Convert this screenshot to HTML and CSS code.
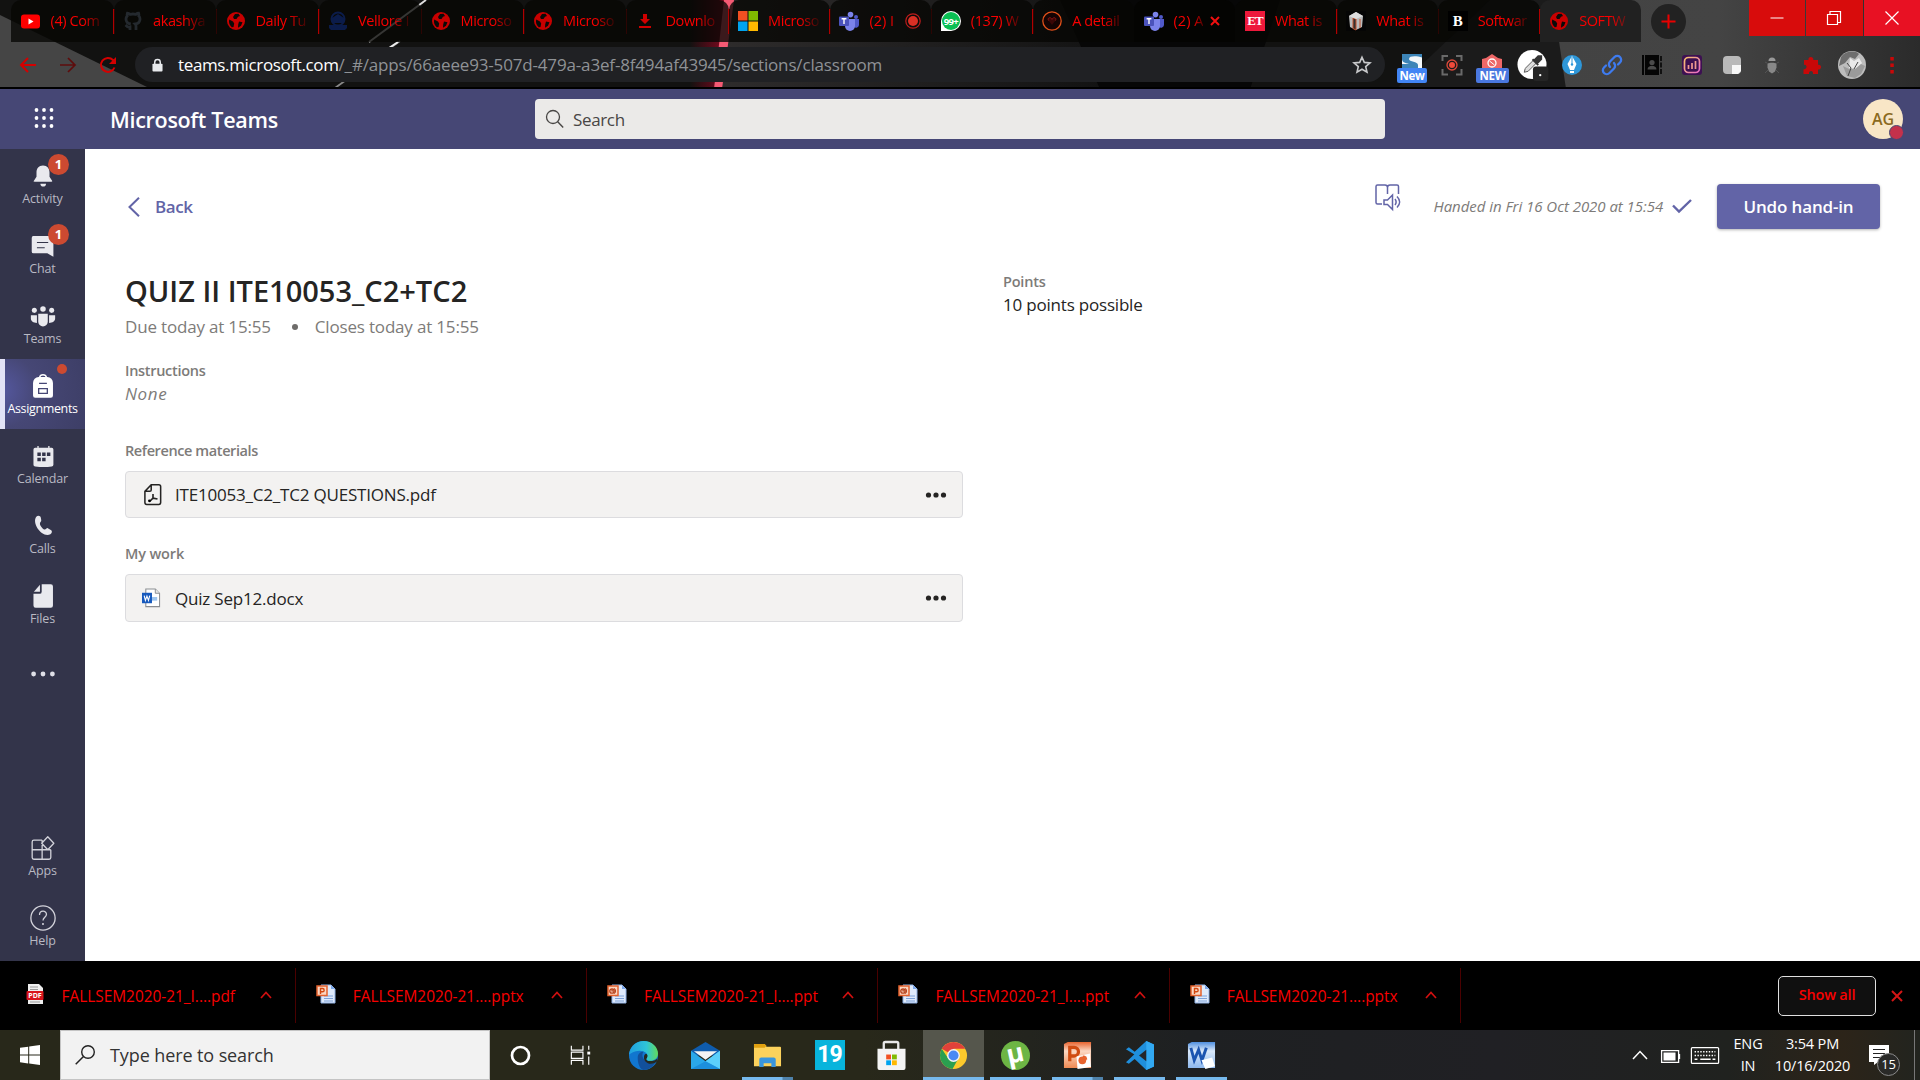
FILE: index.html
```html
<!DOCTYPE html>
<html lang="en">
<head>
<meta charset="utf-8">
<title>Microsoft Teams</title>
<link rel="stylesheet" href="styles.css">
</head>
<body>
<svg class="defs" aria-hidden="true">
  <defs>
    <linearGradient id="gEdge" x1="0" y1="0" x2="1" y2="0"><stop offset="0" stop-color="#1f9fe0"/><stop offset=".6" stop-color="#2fc4d8"/><stop offset="1" stop-color="#62dc5a"/></linearGradient>
    <linearGradient id="gOrange" x1="0" y1="0" x2="0" y2="1"><stop offset="0" stop-color="#e8642f"/><stop offset=".35" stop-color="#fbd9c4"/><stop offset="1" stop-color="#f08a52"/></linearGradient>
    <linearGradient id="gBlue" x1="0" y1="0" x2="0" y2="1"><stop offset="0" stop-color="#4f8fe0"/><stop offset=".35" stop-color="#dbe9fa"/><stop offset="1" stop-color="#8db8ee"/></linearGradient>
    <linearGradient id="gInsta" x1="0" y1="0" x2="1" y2="1"><stop offset="0" stop-color="#f7c46a"/><stop offset="1" stop-color="#e768c8"/></linearGradient>
  </defs>
  <symbol id="globe" viewBox="0 0 20 20"><circle cx="10" cy="10" r="9" fill="#c80000"/><path d="M3.200 8.500 7 10.500l1.200 2L7.500 16l-1.700.2A8 8 0 0 1 3.200 8.500zM9 3l3.500-.3 1.500 2.300-2 .8-1.500 2.200L8 8 7 6zM13 10.500l3.500.8-1.500 3.500-3 2 .2-3.300z" fill="#0a0a08"/></symbol>
  <symbol id="teams" viewBox="0 0 20 20"><circle cx="17" cy="6" r="2" fill="#5059c9"/><circle cx="11.500" cy="3.600" r="2.800" fill="#7b83eb"/><path d="M14 8h6v6a3 3 0 0 1-5 2z" fill="#5059c9"/><path d="M6 8h10v7a5 5 0 0 1-10 0z" fill="#7b83eb"/><rect y="5.500" width="10" height="9.500" rx="1" fill="#4b53bc"/><path d="M2.600 7.700h4.800M5 7.700V13" stroke="#fff" stroke-width="1.400"/></symbol>
  <symbol id="ppt" viewBox="0 0 20 20"><path d="M5 1h10l4 4v14H5z" fill="#dfeafb" stroke="#8fb1e4"/><path d="M15 1v4h4" fill="#7ea8e8"/><path d="M8 12h9M8 14.500h9M8 17h9" stroke="#7da2da"/><rect x="1" y="2" width="10" height="9.500" fill="#fbd6c2" stroke="#e4622d" stroke-width="1.500"/><path d="M4.500 10V4.500h2a1.500 1.500 0 0 1 0 3.300h-2" fill="none" stroke="#d2470f" stroke-width="1.400"/></symbol>
  <symbol id="pptold" viewBox="0 0 20 20"><path d="M5 1h10l4 4v14H5z" fill="#dfeafb" stroke="#8fb1e4"/><path d="M15 1v4h4" fill="#7ea8e8"/><path d="M8 12h9M8 14.500h9M8 17h9" stroke="#7da2da"/><rect x="1" y="2" width="10" height="9.500" fill="#fbd6c2" stroke="#e4622d" stroke-width="1.500"/><circle cx="5" cy="7" r="2.200" fill="none" stroke="#b5401a" stroke-width="1.300"/><path d="M7 4.500c2 1 2 4 0 5M5 5v2h2" fill="none" stroke="#b5401a" stroke-width="1.200"/></symbol>
  <symbol id="chev" viewBox="0 0 12 8"><path d="M1 7l5-5.500L11 7" fill="none" stroke="#d01010" stroke-width="1.700"/></symbol>
  <symbol id="dots" viewBox="0 0 22 6"><circle cx="3.500" cy="3" r="2.600"/><circle cx="11" cy="3" r="2.600"/><circle cx="18.500" cy="3" r="2.600"/></symbol>
</svg>

<div class="screen">
  <div class="chrome">
    <svg class="theme" viewBox="0 0 1920 89" preserveAspectRatio="none">
      <defs>
        <linearGradient id="tGrey" x1="0" x2="1"><stop offset="0" stop-color="#434343"/><stop offset=".45" stop-color="#444"/><stop offset="1" stop-color="#2b2b2b"/></linearGradient>
        <linearGradient id="tMid" x1="0" x2="1"><stop offset="0" stop-color="#2e2c2c"/><stop offset="1" stop-color="#131313"/></linearGradient>
        <linearGradient id="tGlow" x1="0" x2="1"><stop offset="0" stop-color="#90001c" stop-opacity="0"/><stop offset="1" stop-color="#900a24"/></linearGradient>
      </defs>
      <rect width="1920" height="89" fill="#121211"/>
      <path d="M0 15 147 87H0z" fill="#454545"/>
      <path d="M426 0 369 42" stroke="#ddd" stroke-width="2"/>
      <path d="M400 41 335 88" stroke="#888" stroke-width="1.800"/>
      <path d="M398 42 389 48" stroke="#eee" stroke-width="2"/>
      <path d="M690 0h40l-11 89h-29z" fill="url(#tGlow)"/>
      <path d="M730 0h330l40 89H720z" fill="url(#tMid)"/>
      <path d="M1060 0h220l-30 89h-150z" fill="#070707"/>
      <path d="M1490 0h66l10 89h-170z" fill="#1b1b1b"/>
      <path d="M1553 0h367v89h-354z" fill="url(#tGrey)"/>
      <path d="M724 0h10l-12 89h-8z" fill="#f55a74"/>
      <rect y="87" width="1920" height="2" fill="#000"/>
    </svg>
    <div class="tabstrip">
      <div class="tabs">
        <div class="tab"><svg class="fav" viewBox="0 0 20 20"><rect y="3.500" width="19" height="14" rx="3" fill="#f00"/><path d="M7.500 7.500v6l5-3z" fill="#fff"/></svg><span class="tt">(4) Com</span></div>
        <div class="tab"><svg class="fav" viewBox="0 0 20 20"><path d="M7 19v-3c-3 .7-3.500-1.200-4.500-2M13 19v-4c0-1-.3-1.500-.8-2 3-.4 4.800-1.700 4.800-5 0-1.200-.4-2.300-1.200-3 .2-1 .1-2-.2-2.800-1 0-2 .6-2.800 1.200a10 10 0 0 0-5.600 0C6.400 2.700 5.400 2.200 4.400 2.200c-.3.800-.4 1.800-.2 2.800C3.400 5.800 3 6.900 3 8c0 3.300 1.800 4.600 4.800 5" fill="none" stroke="#24292e" stroke-width="2.800"/></svg><span class="tt">akashya</span></div>
        <div class="tab"><svg class="fav"><use href="#globe"/></svg><span class="tt">Daily Tu</span></div>
        <div class="tab"><svg class="fav" viewBox="0 0 20 20"><circle cx="10" cy="8" r="6.500" fill="none" stroke="#0b1c4a" stroke-width="2"/><path d="M4 7l6-4 6 4v5H4zM1 14h18v3l-2 2H3l-2-2z" fill="#0b1c4a"/></svg><span class="tt">Vellore I</span></div>
        <div class="tab"><svg class="fav"><use href="#globe"/></svg><span class="tt">Microso</span></div>
        <div class="tab"><svg class="fav"><use href="#globe"/></svg><span class="tt">Microso</span></div>
        <div class="tab"><svg class="fav dlfav" viewBox="0 0 20 20"><path d="M8 3h4v5h3l-5 5-5-5h3zM4 15h12v2H4z" fill="#d00000"/></svg><span class="tt">Downlo</span></div>
        <div class="tab"><svg class="fav" viewBox="0 0 20 20"><path d="M0 0h9.500v9.500H0z" fill="#f25022"/><path d="M10.500 0H20v9.500h-9.500z" fill="#7fba00"/><path d="M0 10.500h9.500V20H0z" fill="#00a4ef"/><path d="M10.500 10.500H20V20h-9.500z" fill="#ffb900"/></svg><span class="tt">Microso</span></div>
        <div class="tab"><svg class="fav"><use href="#teams"/></svg><span class="tt narrow">(2) I</span><svg class="rec" viewBox="0 0 16 16"><circle cx="8" cy="8" r="7.200" fill="none" stroke="#c01c1c" stroke-width="1.200"/><circle cx="8" cy="8" r="5" fill="#d93025"/></svg></div>
        <div class="tab"><svg class="fav" viewBox="0 0 20 20"><path d="M0 20V10A10 10 0 1 1 10 20z" fill="#fff"/><circle cx="10" cy="10" r="9" fill="#0abf53"/><text x="9.800" y="13.800" class="badge99">99+</text></svg><span class="tt">(137) W</span></div>
        <div class="tab"><svg class="fav" viewBox="0 0 20 20"><circle cx="10" cy="10" r="9.200" fill="#150303" stroke="#e0501a" stroke-width="1.300"/><path d="M10 14 6.500 9.500C5 6.500 9 5.500 10 8.500c1-3 5-2 3.500 1z" fill="#3a0606"/><path d="M10 8.500c1-3 5-2 3.500 1M6.500 9.500C5 6.500 9 5.500 10 8.500" fill="none" stroke="#8a1414"/></svg><span class="tt">A detail</span></div>
        <div class="tab active"><svg class="fav"><use href="#teams"/></svg><span class="tt narrow">(2) A</span><svg class="tx" viewBox="0 0 10 10"><path d="M1 1l8 8M9 1 1 9" stroke="#f01010" stroke-width="2"/></svg></div>
        <div class="tab"><span class="fav et">ET</span><span class="tt">What is</span></div>
        <div class="tab"><svg class="fav" viewBox="0 0 20 20"><rect width="20" height="20" fill="#050505"/><path d="M10 1l7 4-1 11-6 3-6-3L3 5z" fill="#bbb"/><path d="M10 8v11l-3-1.500V7zM14 8v9" stroke="#c4512c" fill="#333"/><path d="M10 1l7 4-7 3-7-3z" fill="#ddd"/></svg><span class="tt">What is</span></div>
        <div class="tab"><span class="fav bb">B</span><span class="tt">Softwar</span></div>
        <div class="tab last"><svg class="fav"><use href="#globe"/></svg><span class="tt">SOFTW</span></div>
      </div>
      <div class="newtab"><svg viewBox="0 0 16 16"><path d="M8 .5v15M.5 8h15" stroke="#e80000" stroke-width="2.200"/></svg></div>
      <div class="winbtns">
        <div class="wb"><svg viewBox="0 0 14 14"><path d="M.5 7h13" stroke="#fff"/></svg></div>
        <div class="wb"><svg viewBox="0 0 14 14"><path d="M.5 3.500h10v10H.5zM3 3.500V.5h10.500v11H11" fill="none" stroke="#fff" stroke-width="1.200"/></svg></div>
        <div class="wb close"><svg viewBox="0 0 14 14"><path d="M.5.5l13 13M13.500.5l-13 13" stroke="#fff" stroke-width="1.200"/></svg></div>
      </div>
    </div>
    <div class="toolbar">
      <div class="nav">
        <svg viewBox="0 0 18 18"><path d="M17 9H2M9 2 2 9l7 7" fill="none" stroke="#d40000" stroke-width="2"/></svg>
        <svg viewBox="0 0 18 18"><path d="M1 9h15M9 2l7 7-7 7" fill="none" stroke="#5e0c0c" stroke-width="1.700"/></svg>
        <svg viewBox="0 0 18 18"><path d="M15.500 11.500A7 7 0 1 1 14 4l2 2" fill="none" stroke="#d40000" stroke-width="2"/><path d="M17 1v7h-7z" fill="#d40000"/></svg>
      </div>
      <div class="omnibox">
        <svg class="lock" viewBox="0 0 12 14"><path d="M3 6V4a3 3 0 0 1 6 0v2" fill="none" stroke="#e8eaed" stroke-width="1.600"/><rect x=".5" y="5.500" width="11" height="8.500" rx="1" fill="#e8eaed"/></svg>
        <span class="url"><b>teams.microsoft.com</b>/_#/apps/66aeee93-507d-479a-a3ef-8f494af43945/sections/classroom</span>
        <svg class="star" viewBox="0 0 20 20"><path d="M10 2.200l2.300 5.200 5.700.5-4.300 3.700 1.300 5.600-5-3-5 3 1.300-5.600L2 7.900l5.700-.5z" fill="none" stroke="#c8c9cb" stroke-width="1.600"/></svg>
      </div>
      <div class="exts">
        <div class="ext"><svg viewBox="0 0 30 30"><rect x="5" y="4" width="20" height="16" fill="#f4f8fb"/><path d="M5 4h20v3.500c-5-1.500-13-2-13 1.500 0 3 9 2.500 9 6v3H5v-4h7c-4-1-7-2-7-5z" fill="#3d85b8"/></svg><span class="pill">New</span></div>
        <div class="ext"><svg viewBox="0 0 30 30"><path d="M5.500 11V6H11M19 6h5.500v5M24.500 19v5.500H19M11 24.500H5.500V19" fill="none" stroke="#6a6a6a" stroke-width="2"/><circle cx="15" cy="15" r="5" fill="none" stroke="#e04a3a" stroke-width="1.300"/><circle cx="15" cy="15" r="3" fill="#f04a3a"/></svg></div>
        <div class="ext"><svg viewBox="0 0 30 30"><path d="M5 9l4-1 6-4 6 4 4 1v9H5z" fill="#ef6868"/><circle cx="15" cy="13" r="4" fill="none" stroke="#fff" stroke-width="1.300"/><path d="M12.500 11l5 4" stroke="#fff"/></svg><span class="pill wide">NEW</span></div>
        <div class="ext"><svg viewBox="0 0 30 31"><circle cx="15" cy="15" r="15" fill="#fff"/><path d="M7 23l1-4 9-9 3 3-9 9z" fill="#ddd" stroke="#555"/><path d="M15.500 9.500l6 6M17.500 10.500l4-4 3 0 0 3-4 4z" fill="#333" stroke="#333" stroke-width="2"/><rect x="16" y="17" width="16" height="15" rx="3" fill="#252525"/><circle cx="23.500" cy="26" r="1.200" fill="#fff"/></svg></div>
        <div class="ext"><svg viewBox="0 0 30 30"><circle cx="15" cy="15" r="10" fill="#2e97d9"/><path d="M15 6l4.500 8-2.500 6h-4l-2.500-6zM13 21h4v2h-4z" fill="#fff"/><path d="M15 7v7" stroke="#2e97d9"/><circle cx="15" cy="14.500" r="1.200" fill="#2e97d9"/></svg></div>
        <div class="ext"><svg viewBox="0 0 30 30"><g fill="none" stroke="#3e7bef" stroke-width="2.300" stroke-linecap="round"><path d="M13 17a4 4 0 0 1 0-5.500l4.500-4.500a3.800 3.800 0 0 1 5.500 5.500l-2 2"/><path d="M17 13a4 4 0 0 1 0 5.500L12.500 23A3.800 3.800 0 0 1 7 17.500l2-2"/></g></svg></div>
        <div class="ext"><svg viewBox="0 0 30 30"><path d="M5 5h2v20H5zM8 5h14v20H8z" fill="#050505"/><path d="M23 6h2v5h-2zM23 12.500h2v5h-2zM23 19h2v5h-2z" fill="#111"/><circle cx="15" cy="12.500" r="2.600" fill="#4a4a4a"/><path d="M10.500 19.500c0-5 9-5 9 0z" fill="#4a4a4a"/></svg></div>
        <div class="ext"><svg viewBox="0 0 30 30"><rect x="5" y="5" width="20" height="20" rx="3" fill="#3d1052"/><rect x="7.500" y="7.500" width="15" height="15" rx="4" fill="none" stroke="url(#gInsta)" stroke-width="1.700"/><path d="M11.500 15v4M15 13v6M18.500 11v8" stroke="#f09a90" stroke-width="1.700"/></svg></div>
        <div class="ext"><svg viewBox="0 0 30 30"><rect x="6" y="6" width="18" height="18" rx="4" fill="#b9b9b9"/><path d="M15 15h9v6l-3 3h-6z" fill="#f7f7f7"/></svg></div>
        <div class="ext"><svg viewBox="0 0 30 30"><path d="M11.500 11a3.500 3.500 0 0 1 7 0z" fill="#999"/><path d="M10.500 13.500c2-1 7-1 9 0v4l-1.500 4-3 2-3-2-1.500-4z" fill="#888"/><path d="M8 23l3-3M22 23l-3-3M8 12l2 1M22 12l-2 1" stroke="#555"/></svg></div>
        <div class="ext"><svg viewBox="0 0 30 30"><path d="M7 10h4.500c-1-4 5.500-4 4.800 0H21v4.800c4-1 4 5.400 0 4.700V24h-5c.6-4-4.500-4-4 0H6.500v-4.800c4 .5 4-4.900.5-4.400z" fill="#c90808"/></svg></div>
        <div class="ext"><svg viewBox="0 0 30 30"><circle cx="15" cy="15" r="14" fill="#bdbdbd"/><path d="M4 7c4-6 14-7 18-3l-4 5-5-2-5 6-6 3z" fill="#6e6e6e"/><path d="M13 8l4 3 5-3 3 5-5 6-8-1z" fill="#e9e9e9"/><path d="M6 16l6 3 6 0 6-5 4 2-4 8-6 4-8-2z" fill="#9b9b9b"/><path d="M10 13l4 5-3 8M21 12l-4 7" stroke="#444" fill="none"/></svg></div>
        <div class="ext"><svg viewBox="0 0 30 30"><path d="M13.300 7h3.500v3.500h-3.500zM13.300 13.500h3.500V17h-3.500zM13.300 20h3.500v3.500h-3.500z" fill="#c90808"/></svg></div>
      </div>
    </div>
  </div>

  <header class="tbar">
    <svg class="waffle" viewBox="0 0 20 20" fill="#fff"><circle cx="2.500" cy="2" r="1.900"/><circle cx="10" cy="2" r="1.900"/><circle cx="17.500" cy="2" r="1.900"/><circle cx="2.500" cy="10" r="1.900"/><circle cx="10" cy="10" r="1.900"/><circle cx="17.500" cy="10" r="1.900"/><circle cx="2.500" cy="18" r="1.900"/><circle cx="10" cy="18" r="1.900"/><circle cx="17.500" cy="18" r="1.900"/></svg>
    <span class="brand">Microsoft Teams</span>
    <div class="search"><svg viewBox="0 0 20 20"><circle cx="8" cy="8" r="6.500" fill="none" stroke="#484644" stroke-width="1.300"/><path d="M12.700 12.700l5.500 5.800" stroke="#484644" stroke-width="1.400"/></svg><span>Search</span></div>
    <div class="avatar"><span>AG</span><i class="presence"></i></div>
  </header>

  <div class="work">
    <nav class="rail">
      <div class="ri"><svg viewBox="0 0 30 30"><path d="M15 3c5 0 7.500 3.500 7.500 8v5l3 4.500c.4.600 0 1-.6 1H5.100c-.6 0-1-.4-.6-1l3-4.500v-5C7.500 6.500 10 3 15 3z" fill="#e9e9ee"/><path d="M12 24h6.500a3.200 3.200 0 0 1-6.500 0z" fill="#e9e9ee"/></svg><span>Activity</span><i class="bdg">1</i></div>
      <div class="ri"><svg viewBox="0 0 30 30"><path d="M3 3.500h22a2 2 0 0 1 2 2v22l-7-4H4a2 2 0 0 1-2-2v-16z" fill="#e9e9ee"/><path d="M8 11h13M8 17h9" stroke="#33344a" stroke-width="1.300"/></svg><span>Chat</span><i class="bdg">1</i></div>
      <div class="ri"><svg viewBox="0 0 30 30" fill="#e9e9ee"><circle cx="5" cy="8.500" r="2.900"/><circle cx="15" cy="7" r="3.200"/><circle cx="25" cy="8.500" r="2.900"/><path d="M9.500 12.500h11v9a5.500 5.500 0 0 1-11 0zM1 14h7v9C4 23 1 21 1 18zM29 14h-7v9c4 0 7-2 7-5z"/></svg><span>Teams</span></div>
      <div class="ri on"><svg viewBox="0 0 30 30"><path d="M11 5c1-4 7-4 8 0" fill="none" stroke="#fff" stroke-width="1.600"/><path d="M10 4.500h10a7 7 0 0 1 6.500 7V26a2.500 2.500 0 0 1-2.500 2.500H6A2.500 2.500 0 0 1 3.500 26V11.500a7 7 0 0 1 6.500-7z" fill="#fff"/><path d="M10.500 12h9M10 18h10v5.500H10z" fill="none" stroke="#464775" stroke-width="1.500"/></svg><span>Assignments</span><i class="dot"></i></div>
      <div class="ri"><svg viewBox="0 0 30 30"><path d="M6 5.500h2.500V3.500H10v2h11v-2h1.500v2H25a2 2 0 0 1 2 2V25a2 2 0 0 1-2 2c-6 1-12 1-19 0a2 2 0 0 1-2-2V7.500a2 2 0 0 1 2-2z" fill="#e9e9ee"/><path d="M8.500 11h4v4h-4zM14 11h4v4h-4zM19.500 11h4v4h-4zM8.500 17h4v4h-4zM14 17h4v4h-4z" fill="#33344a"/></svg><span>Calendar</span></div>
      <div class="ri"><svg viewBox="0 0 30 30"><path d="M7 4.500c2-2 5-1.500 5.500 1l.5 3c.2 1.500-2 2.500-1.500 4.500s3 5.500 5 6 2.500-2 4-1.500l3.500 2c2 1 1.500 3.500-.5 5C14 29 2 12 7 4.500z" fill="#e9e9ee"/></svg><span>Calls</span></div>
      <div class="ri"><svg viewBox="0 0 30 30"><path d="M13.500 1.500H24a2.500 2.500 0 0 1 2.500 2.500v22a2.500 2.500 0 0 1-2.500 2.500H6.500A2.500 2.500 0 0 1 4 26V12.500h7a2.500 2.500 0 0 0 2.500-2.500z" fill="#e9e9ee"/><path d="M11.500 2v8H4.500z" fill="#e9e9ee"/></svg><span>Files</span></div>
      <div class="ri more"><svg viewBox="0 0 24 6" fill="#e0e0e8"><circle cx="2.600" cy="3" r="2.400"/><circle cx="12" cy="3" r="2.400"/><circle cx="21.400" cy="3" r="2.400"/></svg></div>
      <div class="ri apps"><svg viewBox="0 0 30 30"><path d="M14 6H4.500a2 2 0 0 0-2 2v18a2 2 0 0 0 2 2H22a2 2 0 0 0 2-2V17M14 5.800V28M2.500 17H24M20.500 2l7 7.500-7 7.500-7-7.500z" fill="none" stroke="#d2d2da" stroke-width="1.500" stroke-linejoin="round"/></svg><span>Apps</span></div>
      <div class="ri"><svg viewBox="0 0 30 30"><circle cx="15" cy="15" r="14" fill="none" stroke="#d2d2da" stroke-width="1.500"/><path d="M11 11.500c0-6 8-5.500 8-.8 0 3.500-4 3.500-4 7.300" fill="none" stroke="#d2d2da" stroke-width="1.500"/><circle cx="15" cy="22" r="1.200" fill="#d2d2da"/></svg><span>Help</span></div>
    </nav>
    <main class="main">
      <div class="top">
        <svg class="bk" viewBox="0 0 12 20"><path d="M11 .8 1.500 10l9.500 9.200" fill="none" stroke="#6264a7" stroke-width="2"/></svg>
        <span class="back">Back</span>
        <svg class="reader" viewBox="0 0 26 27"><path d="M7 20H2.500A1.500 1.500 0 0 1 1 18.500v-16A1.500 1.500 0 0 1 2.500 1H10c1.500 0 2.500 1 2.500 2.500V10M12.500 3.500C12.500 2 13.500 1 15 1h7a1.500 1.500 0 0 1 1.500 1.500V10" fill="none" stroke="#6264a7" stroke-width="1.500"/><path d="M9 16h3.500l5-5v14.500l-5-5H9zM20 15c1.500 2 1.500 4 0 6M22 12.500c3.500 3.500 3.500 7.500 0 11" fill="none" stroke="#6264a7" stroke-width="1.500"/></svg>
        <span class="handed">Handed in Fri 16 Oct 2020 at 15:54</span>
        <svg class="check" viewBox="0 0 20 14"><path d="M1 6.500l6 6L19 1" fill="none" stroke="#6264a7" stroke-width="2.400"/></svg>
        <button class="undo"><span>Undo hand-in</span></button>
      </div>
      <div class="cols">
        <section>
          <h1>QUIZ II ITE10053_C2+TC2</h1>
          <p class="due"><span>Due today at 15:55</span><i></i><span>Closes today at 15:55</span></p>
          <h2 class="l1">Instructions</h2>
          <p class="none">None</p>
          <h2 class="l2">Reference materials</h2>
          <div class="file f1"><svg class="pdf" viewBox="0 0 20 24"><path d="M8 1.200h8.500a2 2 0 0 1 2 2V21a2 2 0 0 1-2 2H3a2 2 0 0 1-2-2V8.500zM8 1.200V7a1.500 1.500 0 0 1-1.500 1.500H1" fill="none" stroke="#252423" stroke-width="1.700"/><path d="M10 11.500v4.500l-4 4M10 16l5 1" fill="none" stroke="#252423" stroke-width="1.800"/><circle cx="6" cy="19" r="1.500"/></svg><span>ITE10053_C2_TC2 QUESTIONS.pdf</span><svg class="ell"><use href="#dots"/></svg></div>
          <h2 class="l3">My work</h2>
          <div class="file f2"><svg class="docx" viewBox="0 0 20 20"><path d="M4 .6h10l4.500 4.500v14H4z" fill="#fff" stroke="#8a8d91" stroke-width="1.100"/><path d="M14 .6V5h4.500" fill="#e8e8e8" stroke="#8a8d91"/><path d="M10 10h6M10 12h6" stroke="#7fb2ea" stroke-width="1.500"/><rect y="4.500" width="10.500" height="11" fill="#185abd"/><path d="M2.300 7.500l1.300 5 1.600-4.500L6.800 12.500l1.300-5" fill="none" stroke="#fff" stroke-width="1.200"/></svg><span>Quiz Sep12.docx</span><svg class="ell"><use href="#dots"/></svg></div>
        </section>
        <aside>
          <h2>Points</h2>
          <p>10 points possible</p>
        </aside>
      </div>
    </main>
  </div>

  <div class="shelf">
    <div class="dl"><svg class="di" viewBox="0 0 20 20"><path d="M3 0h11l4 4v16H3z" fill="#eee"/><path d="M5 3h8M5 5.500h8M5 18h10" stroke="#999"/><rect x="1.500" y="7" width="17" height="9" rx="1" fill="#d8141c"/><text x="10" y="14" class="pdft">PDF</text></svg><span>FALLSEM2020-21_I....pdf</span><svg class="dc"><use href="#chev"/></svg></div>
    <div class="dl"><svg class="di"><use href="#ppt"/></svg><span>FALLSEM2020-21....pptx</span><svg class="dc"><use href="#chev"/></svg></div>
    <div class="dl"><svg class="di"><use href="#pptold"/></svg><span>FALLSEM2020-21_I....ppt</span><svg class="dc"><use href="#chev"/></svg></div>
    <div class="dl"><svg class="di"><use href="#pptold"/></svg><span>FALLSEM2020-21_I....ppt</span><svg class="dc"><use href="#chev"/></svg></div>
    <div class="dl"><svg class="di"><use href="#ppt"/></svg><span>FALLSEM2020-21....pptx</span><svg class="dc"><use href="#chev"/></svg></div>
    <button class="showall">Show all</button>
    <svg class="sx" viewBox="0 0 12 12"><path d="M1 1l10 10M11 1 1 11" stroke="#d41515" stroke-width="2"/></svg>
  </div>

  <div class="taskbar">
    <div class="start"><svg viewBox="0 0 20 20" fill="#fff"><path d="M0 2.800 8.200 1.700v7.800H0zM9.200 1.500 20 0v9.500H9.200zM0 10.500h8.200v7.900L0 17.200zM9.200 10.500H20V20L9.200 18.500z"/></svg></div>
    <div class="tsearch"><svg viewBox="0 0 20 20"><circle cx="13" cy="7" r="6.300" fill="none" stroke="#222" stroke-width="1.400"/><path d="M8.500 11.500.7 19.300" stroke="#222" stroke-width="1.500"/></svg><span>Type here to search</span></div>
    <div class="ti c1"><svg viewBox="0 0 30 30"><circle cx="15" cy="15" r="8.800" fill="none" stroke="#fff" stroke-width="2.800"/></svg></div>
    <div class="ti c2"><svg viewBox="0 0 30 30"><path d="M4.500 5v4.500h12V5M4.500 24.500V20h12v4.500M4.500 11.500h12v6.500h-12zM22.500 5v4M22.500 16v8.500" fill="none" stroke="#fff" stroke-width="1.200"/><path d="M21 11h3v3h-3z" fill="#fff"/></svg></div>
    <div class="ti"><svg viewBox="0 0 30 30"><circle cx="15" cy="15" r="15" fill="#1176cf"/><path d="M0 14C1 5 8 0 15 0c9 0 15 6.500 15 13 0 5-4 7.500-8 7.500-3 0-5-1-4-2.500 3-5-2-8-7-8-6 0-9 3-11 4z" fill="url(#gEdge)"/><path d="M9 17c0-4 3-6 6-6-3 4 0 10 6 11 4 .5 6-1 7-1-3 6-8 9-13 9-4-1-6-7-6-13z" fill="#12509b"/><path d="M18.500 17.500C17 19 18.500 21 22.500 20.800c2.500 0 5-1 6.500-2.500v3c-7 5-14 1-13.500-5 0-2 1.500-3 2.500-3 1.500 1 1.500 3 .5 4.200z" fill="#26281f"/></svg></div>
    <div class="ti"><svg viewBox="0 0 30 30"><path d="M0 10 15 1l15 9v5H0z" fill="#0f5cad"/><path d="M0 10l15 11L30 10v19H0z" fill="#2aa8ea"/><path d="M30 10 15 21l15 8z" fill="#5cd0fa"/><path d="M0 29l15-8 15 8z" fill="#1c8fdc"/><path d="M3 10.500h24L15 19.500z" fill="#f3f3f3"/></svg></div>
    <div class="ti run stack"><svg viewBox="0 0 30 30"><path d="M1 4a1 1 0 0 1 1-1h10l2 3h14a1 1 0 0 1 1 1v19H1z" fill="#fcd25c"/><path d="M1 4a1 1 0 0 1 1-1h10l2 2-2 2H1z" fill="#e0a010"/><path d="M6.500 27v-8a2 2 0 0 1 2-2h13a2 2 0 0 1 2 2v8h-4.500v-4h-8v4z" fill="#3a96dd"/></svg></div>
    <div class="ti"><div class="n19">19</div></div>
    <div class="ti"><svg viewBox="0 0 30 30"><path d="M7 10V2.500A1.500 1.500 0 0 1 8.500 1h12A1.500 1.500 0 0 1 22 2.500V10" fill="none" stroke="#e8e8e8" stroke-width="2.400"/><path d="M.5 8h29v20a2 2 0 0 1-2 2h-25a2 2 0 0 1-2-2z" fill="#f4f4f4"/><path d="M9.500 14h5v5h-5z" fill="#f25022"/><path d="M15.500 14h5v5h-5z" fill="#7fba00"/><path d="M9.500 20h5v5h-5z" fill="#00a4ef"/><path d="M15.500 20h5v5h-5z" fill="#ffb900"/></svg></div>
    <div class="ti run cur"><svg viewBox="0 0 30 30"><circle cx="15" cy="15" r="14" fill="#fcc92c"/><path d="M15 15 2.900 8A14 14 0 0 1 27.100 8H15z" fill="#e0413a"/><path d="M2.900 8A14 14 0 0 0 14 29l6-11-5-3-5.500 3z" fill="#2b9f50"/><circle cx="15" cy="15" r="6.600" fill="#f4f4f4"/><circle cx="15" cy="15" r="5.200" fill="#4a8af4"/></svg></div>
    <div class="ti run"><svg viewBox="0 0 30 30"><circle cx="15" cy="15" r="15" fill="#6db544"/><text x="15" y="22" class="mu" transform="rotate(-12 15 15)">µ</text></svg></div>
    <div class="ti run stack"><svg viewBox="0 0 30 30"><path d="M1 3l4-2h24v27H1z" fill="url(#gOrange)"/><path d="M7 21V6.500h4.500a4.500 4.500 0 0 1 0 9H7" fill="none" stroke="#d04c12" stroke-width="3.400"/><path d="M14 16l14-3 1 14-14 2z" fill="#fff"/><circle cx="20" cy="20" r="4" fill="#e8642f"/><path d="M20.500 19.500V15a4 4 0 0 1 4.500 4.500z" fill="#e8642f"/></svg></div>
    <div class="ti run"><svg viewBox="0 0 30 30"><path d="M22 0l8 3.500v23L22 30 10 18.500l-6 5-3-1.500L18 6 22 8.500v13L1 8.500l3-2 6 4.500z" fill="#1f8fdc"/><path d="M22 0l8 3.500v23L22 30z" fill="#32a9f2"/><path d="M14.500 15 22 9v12z" fill="#24262a"/></svg></div>
    <div class="ti run"><svg viewBox="0 0 30 30"><path d="M1 3l4-2h24v27H1z" fill="url(#gBlue)"/><path d="M4 7l3.500 13L12 9l3.500 11L20 7" fill="none" stroke="#1b54b0" stroke-width="3"/><path d="M15 20l11-3 3 9-10 3z" fill="#fff"/></svg></div>
    <div class="tray">
      <svg class="t1" viewBox="0 0 16 10"><path d="M1 9l7-7.500L15 9" fill="none" stroke="#fff" stroke-width="1.500"/></svg>
      <svg class="t2" viewBox="0 0 20 13"><path d="M.6.6h17v11.800H.6zM18.500 4v5" fill="none" stroke="#fff" stroke-width="1.300"/><rect x="2.500" y="2.500" width="12" height="8" fill="#fff"/></svg>
      <svg class="t3" viewBox="0 0 30 18"><rect x=".6" y=".6" width="28.800" height="16.800" rx="1" fill="none" stroke="#fff" stroke-width="1.300"/><path d="M4 5h22M4 9h22" stroke="#fff" stroke-width="1.500" stroke-dasharray="1.500 1.500"/><path d="M4 13h3M10 13h11M23 13h3" stroke="#fff" stroke-width="1.500"/></svg>
      <div class="lang"><span>ENG</span><span>IN</span></div>
      <div class="clock"><span>3:54 PM</span><span>10/16/2020</span></div>
      <div class="notif"><svg viewBox="0 0 20 20"><path d="M0 0h20v17H9l-4 3v-3H0z" fill="#fff"/><path d="M4 4.500h12M4 8.500h12M4 12.500h8" stroke="#222" stroke-width="1.200"/></svg><span>15</span></div>
      <div class="peek"></div>
    </div>
  </div>
</div>
</body>
</html>
```
FILE: styles.css
```css
* { box-sizing: border-box; }
body { margin: 0; font-family: "Open Sans", "Noto Sans", sans-serif; background: #fff; }
h1, h2, p { margin: 0; font-weight: 400; }
svg { display: block; flex: none; overflow: visible; }
span { white-space: nowrap; }
i { font-style: normal; }
.defs { position: absolute; width: 0; height: 0; }
.screen { width: 1920px; height: 1080px; display: flex; flex-direction: column; overflow: hidden; }

/* browser frame */
.chrome { position: relative; height: 89px; flex: none; background: #111; }
.theme { position: absolute; inset: 0; width: 1920px; height: 89px; }
.tabstrip, .toolbar { position: relative; display: flex; }
.tabstrip { height: 42px; padding-left: 11px; }
.tabs { display: flex; }
.tab { position: relative; width: 102.500px; height: 42px; padding: 0 5px 0 9.500px; display: flex; align-items: center; background: rgba(6,6,4,.78); border-radius: 10px 10px 0 0; }
.tab:nth-child(n+8) { width: 101.400px; }
.tab::after { content: ""; position: absolute; right: -1px; top: 9px; width: 1.500px; height: 25px; background: #b00000; }
.tab:nth-child(11)::after, .tab:nth-child(12)::after, .tab.last::after { display: none; }
.tab.active { background: #040402; }
.tab.last { background: #212121; }
.fav { width: 20px; height: 20px; margin-right: 10px; flex: none; }
.dlfav { margin: 0 11px 0 -1px; }
.tt { flex: 1; font-size: 14.500px; letter-spacing: -.4px; color: #f80000; line-height: 22px; -webkit-mask-image: linear-gradient(90deg, #000 55%, transparent 95%); mask-image: linear-gradient(90deg, #000 55%, transparent 95%); }
.tt.narrow { letter-spacing: 0; -webkit-mask-image: linear-gradient(90deg, #000 65%, transparent 115%); mask-image: linear-gradient(90deg, #000 65%, transparent 115%); }
.rec { width: 16px; height: 16px; margin: 0 5px 0 3px; }
.tx { width: 10px; height: 10px; margin: 0 10px 0 7px; }
.badge99 { font: 700 9.500px "Open Sans", sans-serif; fill: #fff; text-anchor: middle; letter-spacing: -.7px; }
.et { background: #ed193b; color: #fff; font: 700 13px/20px "Liberation Serif", serif; text-align: center; letter-spacing: -1px; }
.bb { background: #000; color: #fff; font: 700 15px/20px "Liberation Serif", serif; text-align: center; }
.newtab { width: 35px; height: 35px; margin: 4px 0 0 10px; border-radius: 50%; background: #222; display: flex; align-items: center; justify-content: center; }
.newtab svg { width: 15px; height: 15px; }
.winbtns { margin-left: auto; display: flex; gap: 1px; height: 36px; }
.wb { width: 56.500px; background: #d80c0c; display: flex; align-items: center; justify-content: center; }
.wb.close { background: #e81123; }
.wb svg { width: 14px; height: 14px; }
.toolbar { height: 45px; align-items: center; }
.nav { width: 135px; padding-left: 19px; display: flex; gap: 22px; }
.nav svg { width: 18px; height: 18px; }
.omnibox { width: 1250px; height: 35px; border-radius: 18px; background: #202124; display: flex; align-items: center; padding: 0 13px 0 17px; }
.lock { width: 11px; height: 14px; margin-right: 15px; }
.url { font-size: 17px; line-height: 24px; color: #8f9296; letter-spacing: -.16px; }
.url b { font-weight: 400; color: #fff; letter-spacing: -.36px; }
.star { width: 20px; height: 20px; margin-left: auto; }
.exts { display: flex; margin-left: 12px; gap: 10px; }
.ext { position: relative; width: 30px; height: 30px; }
.ext svg { width: 30px; height: 30px; }
.pill { position: absolute; left: 0; top: 18px; width: 30px; height: 15px; border-radius: 2px; background: #4285f4; color: #fff; font: 700 11.500px/15px "Open Sans", sans-serif; text-align: center; letter-spacing: -.3px; }
.pill.wide { left: -1px; width: 33px; background: #4a78e0; }

/* app header */
.tbar { height: 60px; flex: none; background: #464775; display: flex; align-items: center; padding: 0 17px 0 33.500px; }
.waffle { width: 20px; height: 20px; margin: 0 56.500px 2px 0; }
.brand { width: 425px; padding-top: 2px; font-size: 21.500px; font-weight: 600; color: #fff; line-height: 30px; letter-spacing: -.3px; }
.search { width: 850px; height: 40px; background: #ebeae8; border-radius: 4px; display: flex; align-items: center; padding-left: 10px; font-size: 17px; color: #484644; letter-spacing: -.35px; }
.search svg { width: 20px; height: 20px; margin-right: 8px; }
.avatar { position: relative; margin-left: auto; width: 40px; height: 40px; border-radius: 50%; background: #f8e6c6; color: #8b6a1e; font-size: 16px; font-weight: 600; line-height: 40px; text-align: center; }
.presence { position: absolute; left: 26px; top: 26px; width: 15px; height: 15px; border-radius: 50%; background: #c4314b; border: 1.500px solid #464775; }

/* left rail */
.work { height: 812px; flex: none; display: flex; }
.rail { width: 85px; background: #33344a; display: flex; flex-direction: column; }
.ri { position: relative; height: 70px; flex: none; padding-top: 12px; display: flex; flex-direction: column; align-items: center; color: #b9b9c3; font-size: 12.500px; line-height: 16px; letter-spacing: -.15px; }
.ri svg { width: 26px; height: 26px; margin: 2px 0; }
.ri.on { background: radial-gradient(circle at 0 45%, #5558a0 0, #464775 40%, #3d3e66 100%); color: #fff; letter-spacing: -.35px; }
.ri.on::before { content: ""; position: absolute; left: 0; top: 0; width: 5px; height: 70px; background: #e2e2f6; }
.ri.more { justify-content: center; padding: 0 0 1px; }
.ri.more svg { width: 24px; height: 6px; }
.ri.apps { margin-top: auto; }
.bdg { position: absolute; left: 48px; top: 5px; width: 21px; height: 21px; border-radius: 50%; background: #cc4a31; color: #fff; font-size: 13px; font-weight: 700; line-height: 21px; text-align: center; }
.dot { position: absolute; left: 57px; top: 4.500px; width: 10px; height: 10px; border-radius: 50%; background: #cc4a31; }

/* assignment page */
.main { flex: 1; background: #fff; padding: 0 40px; }
.top { height: 115px; display: flex; align-items: center; }
.bk { width: 12px; height: 20px; margin: 1px 15.500px 0 2.500px; }
.back { font-size: 17px; font-weight: 600; color: #6264a7; letter-spacing: -.4px; }
.reader { width: 26px; height: 27px; margin: 0 32.500px 18px auto; }
.handed { margin-bottom: 2px; font-size: 15px; font-style: italic; color: #7d7b79; width: 229px; letter-spacing: -.04px; }
.check { width: 20px; height: 14px; margin: 0 25px 2px 9.500px; }
.undo { width: 163px; height: 45px; border: 0; border-radius: 4px; background: #6264a7; color: #fff; font: 600 17px/24px "Open Sans", sans-serif; letter-spacing: -.15px; box-shadow: 0 1px 3px rgba(0,0,0,.3); padding: 1px 0 0; }
.cols { display: grid; grid-template-columns: 838px 1fr; column-gap: 40px; padding-top: 7px; }
h1 { font-size: 29px; font-weight: 600; line-height: 40px; color: #252423; }
.due { margin-top: 4px; display: flex; align-items: center; font-size: 17px; line-height: 24px; color: #7d7b79; letter-spacing: -.18px; }
.due i { width: 6px; height: 6px; border-radius: 50%; background: #6e6c6a; margin: 0 17px 0 21px; }
h2 { font-size: 14.500px; font-weight: 600; line-height: 20px; color: #7d7b79; letter-spacing: -.3px; }
.l1 { margin-top: 22px; }
.none { margin-top: 1px; font-size: 17px; line-height: 24px; font-style: italic; color: #7d7b79; letter-spacing: .6px; }
.l2 { margin-top: 35px; letter-spacing: -.4px; }
.l3 { margin-top: 26px; letter-spacing: -.15px; }
.file { display: flex; align-items: center; border: 1px solid #dcdcdf; border-radius: 4px; background: #f3f2f1; padding: 0 15px 0 17px; font-size: 17px; color: #252423; letter-spacing: -.2px; }
.f1 { margin-top: 10px; height: 47px; }
.f2 { margin-top: 10px; height: 48px; }
.pdf { width: 18px; height: 23px; margin: 0 13px 0 1px; }
.docx { width: 19px; height: 20px; margin: 0 14px 0 -1px; }
.ell { width: 22px; height: 6px; margin-left: auto; fill: #252423; }
aside h2 { margin-top: 1px; letter-spacing: -.2px; }
aside p { margin-top: 1px; font-size: 17px; line-height: 24px; color: #252423; letter-spacing: -.2px; }

/* downloads */
.shelf { height: 69px; flex: none; background: #000; display: flex; align-items: center; padding: 0 17px 0 4.500px; }
.dl { width: 291.300px; height: 55px; border-right: 1px solid #4a0000; display: flex; align-items: center; padding: 0 23px 0 20px; font-size: 15.400px; color: #f80000; }
.dl span { margin-top: 2px; }
.di { width: 20px; height: 20px; margin: 0 17px 3px 0; }
.dc { width: 12px; height: 8px; margin: 0 0 1px auto; }
.pdft { font: 700 7px "Open Sans", sans-serif; fill: #fff; text-anchor: middle; }
.showall { margin-left: auto; width: 98px; height: 40px; border: 1px solid #e0e0e0; border-radius: 5px; background: #101010; color: #f80000; font: 600 14.500px/20px "Open Sans", sans-serif; letter-spacing: -.2px; padding: 0 0 1px; }
.sx { width: 12px; height: 12px; margin-left: 15px; }

/* taskbar */
.taskbar { height: 50px; flex: none; display: flex; background: linear-gradient(90deg, #28281a 0, #28281a 45%, #1e2022 62%, #202024 78%, #20221f 90%, #2c2419 96%, #22241f 100%); color: #fff; }
.start { width: 60px; display: flex; align-items: center; justify-content: center; }
.start svg { width: 20px; height: 20px; }
.tsearch { width: 430px; background: #f2f2f2; border: 1px solid #c4c4c4; display: flex; align-items: center; padding-left: 14px; color: #333; font-size: 18px; letter-spacing: -.1px; }
.tsearch svg { width: 20px; height: 20px; margin-right: 15px; }
.ti { position: relative; width: 62px; display: flex; align-items: center; justify-content: center; }
.ti.c1 { width: 60px; }
.ti svg { width: 29px; height: 29px; }
.run::after { content: ""; position: absolute; left: 6px; bottom: 0; width: 51px; height: 3px; background: #76b9ed; }
.run.stack::after { background: linear-gradient(90deg, #76b9ed 40px, #4f82aa 41px); }
.ti.cur { background: linear-gradient(#55564c, #55564c) center / 61px 100% no-repeat; }
.ti.cur::after { left: .5px; width: 61px; }
.n19 { width: 30px; height: 30px; margin-left: 1px; background: #08b4dc; color: #fff; font: 700 23px/30px "Roboto", sans-serif; text-align: center; letter-spacing: -1px; }
.mu { font: 700 27px "Open Sans", sans-serif; fill: #fff; text-anchor: middle; }
.tray { margin-left: auto; display: flex; align-items: center; }
.t1 { width: 16px; height: 10px; margin-right: 13px; }
.t2 { width: 20px; height: 13px; margin: 3px 9px 0 0; }
.t3 { width: 30px; height: 17px; margin: 1px 13px 0 0; }
.lang, .clock { display: flex; flex-direction: column; align-items: center; font-size: 14.500px; line-height: 22px; letter-spacing: -.15px; }
.lang { width: 30px; margin-right: 11px; }
.clock { width: 77px; margin-right: 18px; }
.notif { position: relative; width: 20px; height: 20px; margin-right: 25px; }
.notif svg { width: 20px; height: 20px; }
.notif span { position: absolute; left: 8px; top: 8px; width: 23px; height: 23px; border: 1.500px solid #8a8a8a; border-radius: 50%; background: #2a2a28; font-size: 13px; line-height: 20px; text-align: center; letter-spacing: -.3px; }
.peek { width: 6px; height: 50px; border-left: 1px solid #777; }
```
